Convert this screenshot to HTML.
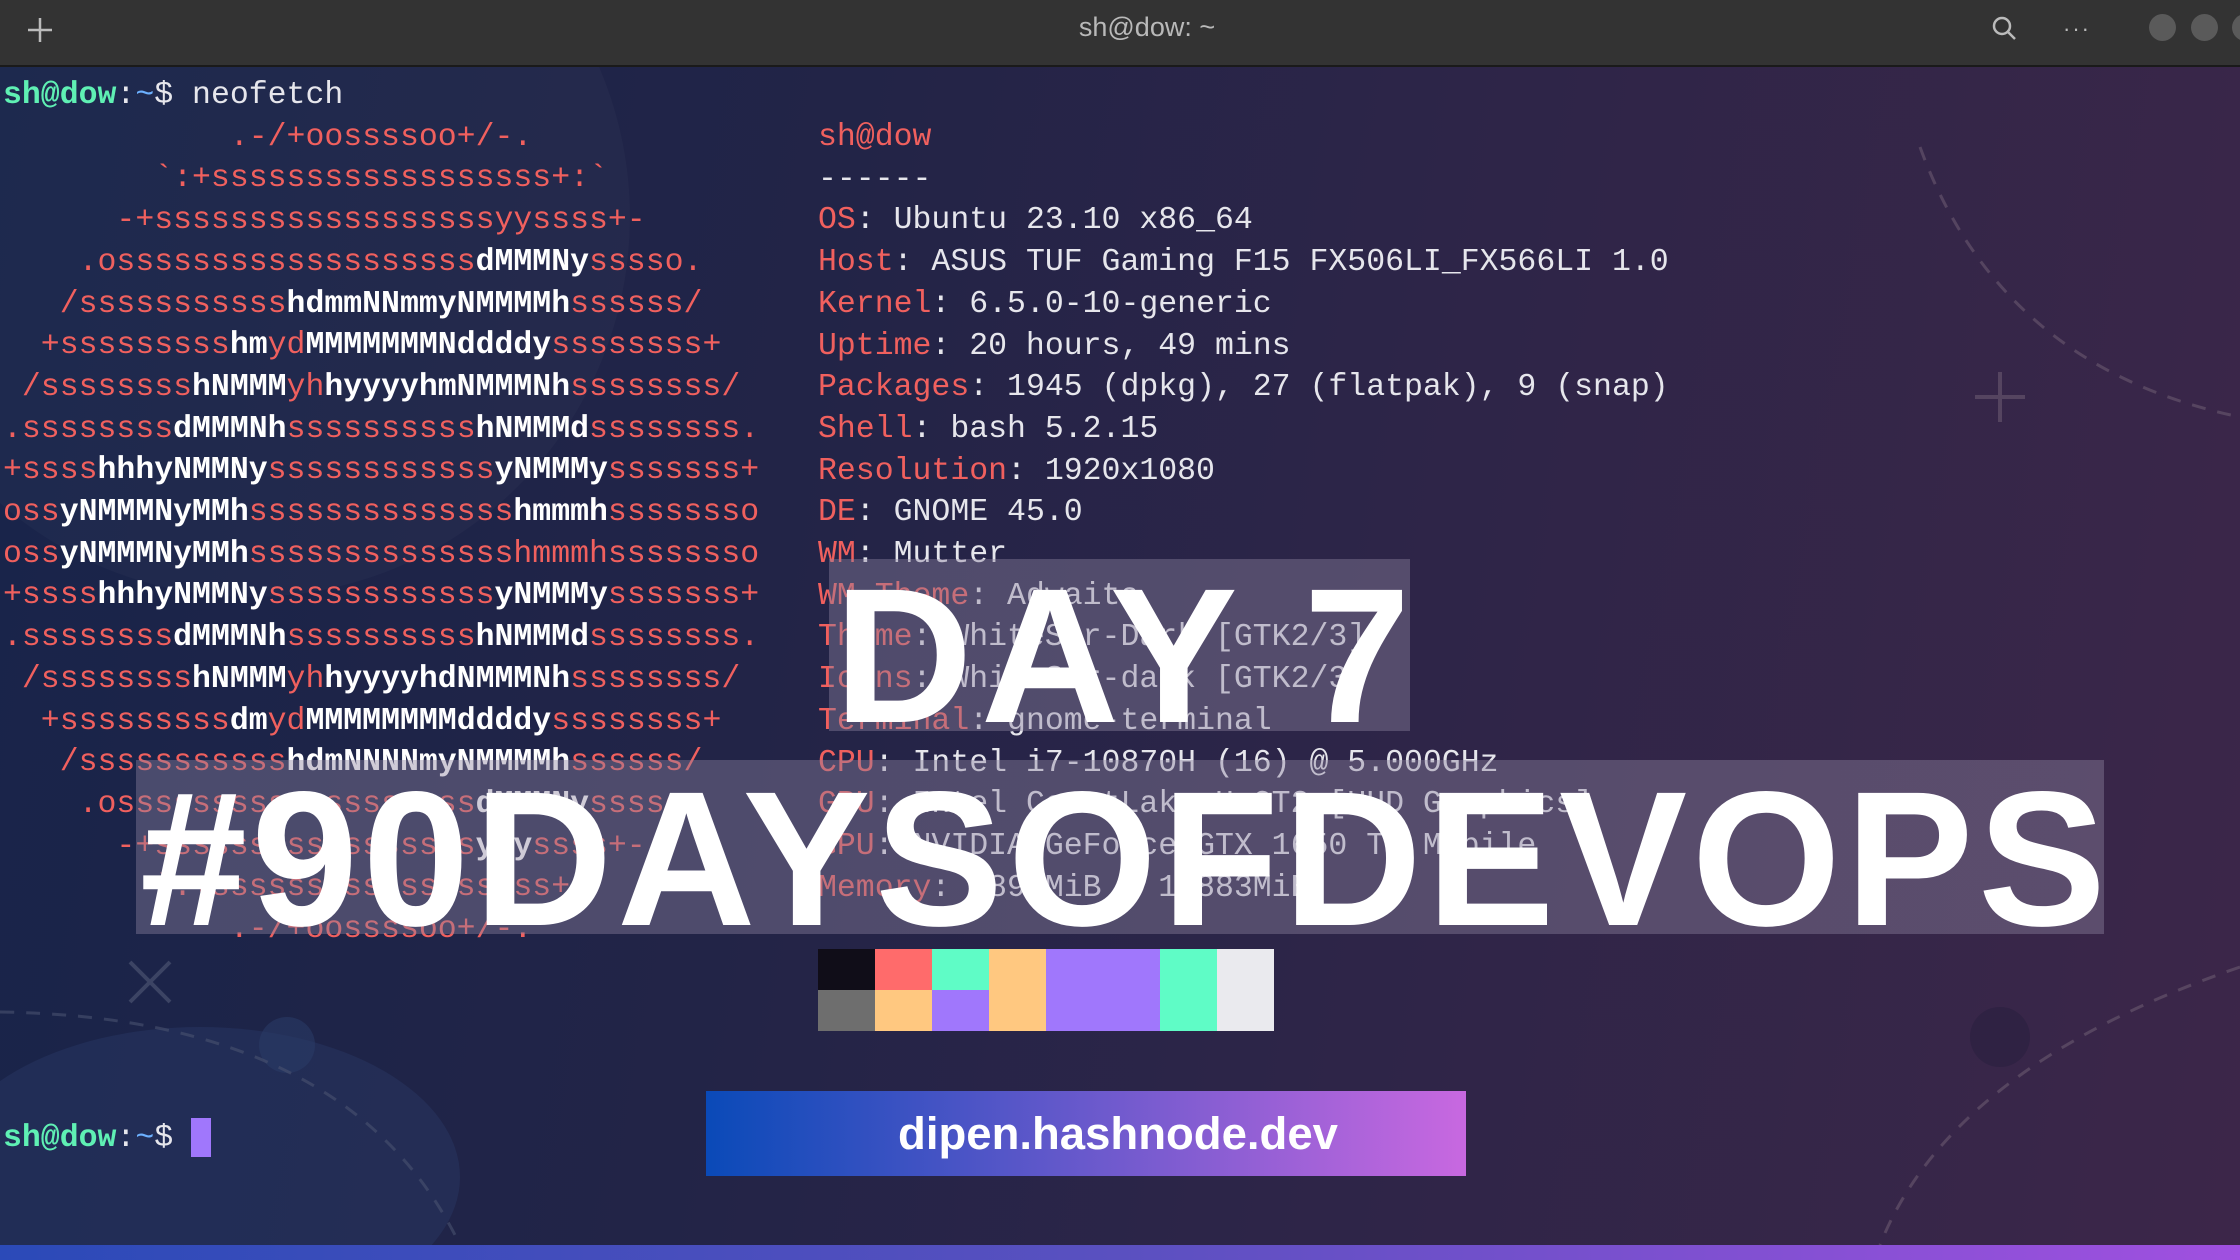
<!DOCTYPE html>
<html><head><meta charset="utf-8"><style>
*{margin:0;padding:0;box-sizing:border-box}
body{width:2240px;height:1260px;overflow:hidden;background:#1c2242;position:relative;font-family:"Liberation Sans",sans-serif}
#bg{position:absolute;left:0;top:67px;width:2240px;height:1178px;background:linear-gradient(100deg,#18244a 0%,#222447 35%,#2d2548 60%,#3c2649 100%)}
#bar{position:absolute;left:0;top:0;width:2240px;height:67px;background:#333333;border-bottom:2px solid #1a1a1a;overflow:hidden}
#title{position:absolute;top:0;left:27px;width:2240px;text-align:center;line-height:54px;color:#b9b9b9;font-size:27px}
.circ{position:absolute;top:14px;width:27px;height:27px;border-radius:50%;background:#5a5a5a}
pre{position:absolute;font-family:"Liberation Mono",monospace;font-size:31.5px;line-height:41.7px;white-space:pre;color:#f0605e}
.w{color:#fff;font-weight:bold}
.g{color:#5ff0b4;font-weight:bold}
.b{color:#6cb0ff}
.t{color:#e6e6ec}
.box{position:absolute;background:rgba(140,130,160,0.42)}
.big{position:absolute;color:#fff;font-weight:bold;font-size:192px;line-height:1;white-space:nowrap}
</style></head><body>
<div id="bg"></div>
<svg style="position:absolute;left:0;top:67px" width="2240" height="1178">
<circle cx="250" cy="150" r="380" fill="#ffffff" opacity="0.025"/>
<ellipse cx="200" cy="1110" rx="260" ry="150" fill="#2a3a66" opacity="0.45"/>
<circle cx="287" cy="978" r="28" fill="#2a3a66" opacity="0.6"/>
<circle cx="2000" cy="970" r="30" fill="#2a2040" opacity="0.6"/>
<path d="M1920 80 Q2000 300 2240 350" stroke="#6a5a70" stroke-width="3" fill="none" stroke-dasharray="14 12" opacity="0.6"/>
<path d="M2240 900 Q1950 1000 1880 1178" stroke="#6a5a70" stroke-width="3" fill="none" stroke-dasharray="14 12" opacity="0.6"/>
<path d="M0 945 Q350 950 460 1178" stroke="#4a5270" stroke-width="3" fill="none" stroke-dasharray="14 12" opacity="0.6"/>
<path d="M2000 305 l0 50 M1975 330 l50 0" stroke="#6a5a70" stroke-width="4" opacity="0.6"/>
<path d="M130 895 l40 40 M170 895 l-40 40" stroke="#4a5270" stroke-width="4" opacity="0.7"/>
</svg>
<div id="bar">
<svg style="position:absolute;left:26px;top:16px" width="28" height="28"><path d="M14 2v24M2 14h24" stroke="#bbb" stroke-width="2.5"/></svg>
<div id="title">sh@dow: ~</div>
<svg style="position:absolute;left:1990px;top:14px" width="30" height="30"><circle cx="12" cy="12" r="8" stroke="#bbb" stroke-width="2.5" fill="none"/><path d="M18 18l7 7" stroke="#bbb" stroke-width="2.5"/></svg>
<div style="position:absolute;left:2063px;top:25px;color:#bbb;font-size:22px;letter-spacing:2px;line-height:8px">···</div>
<div class="circ" style="left:2149px"></div>
<div class="circ" style="left:2191px"></div>
<div class="circ" style="left:2232px"></div>
</div>
<div style="position:absolute;left:0;top:1245px;width:2240px;height:15px;background:linear-gradient(90deg,#2b4ab8,#5a50c0 50%,#a050e0)"></div>
<pre style="left:3px;top:75px"><span class="g">sh@dow</span><span class="t">:</span><span class="b">~</span><span class="t">$ neofetch</span>
            .-/+oossssoo+/-.
        `:+ssssssssssssssssss+:`
      -+ssssssssssssssssssyyssss+-
    .osssssssssssssssssss<span class="w">dMMMNy</span>sssso.
   /sssssssssss<span class="w">hdmmNNmmyNMMMMh</span>ssssss/
  +sssssssss<span class="w">hm</span>yd<span class="w">MMMMMMMNddddy</span>ssssssss+
 /ssssssss<span class="w">hNMMM</span>yh<span class="w">hyyyyhmNMMMNh</span>ssssssss/
.ssssssss<span class="w">dMMMNh</span>ssssssssss<span class="w">hNMMMd</span>ssssssss.
+ssss<span class="w">hhhyNMMNy</span>ssssssssssss<span class="w">yNMMMy</span>sssssss+
oss<span class="w">yNMMMNyMMh</span>ssssssssssssss<span class="w">hmmmh</span>ssssssso
oss<span class="w">yNMMMNyMMh</span>sssssssssssssshmmmhssssssso
+ssss<span class="w">hhhyNMMNy</span>ssssssssssss<span class="w">yNMMMy</span>sssssss+
.ssssssss<span class="w">dMMMNh</span>ssssssssss<span class="w">hNMMMd</span>ssssssss.
 /ssssssss<span class="w">hNMMM</span>yh<span class="w">hyyyyhdNMMMNh</span>ssssssss/
  +sssssssss<span class="w">dm</span>yd<span class="w">MMMMMMMMddddy</span>ssssssss+
   /sssssssssss<span class="w">hdmNNNNmyNMMMMh</span>ssssss/
    .osssssssssssssssssss<span class="w">dMMMNy</span>sssso.
      -+sssssssssssssssss<span class="w">yyy</span>ssss+-
        `:+ssssssssssssssssss+:`
            .-/+oossssoo+/-.




<span class="g">sh@dow</span><span class="t">:</span><span class="b">~</span><span class="t">$ </span></pre>
<div style="position:absolute;left:191px;top:1118px;width:20px;height:39px;background:#a077fc"></div>
<pre style="left:818px;top:117px">sh@dow
<span class="t">------</span>
OS<span class="t">: Ubuntu 23.10 x86_64</span>
Host<span class="t">: ASUS TUF Gaming F15 FX506LI_FX566LI 1.0</span>
Kernel<span class="t">: 6.5.0-10-generic</span>
Uptime<span class="t">: 20 hours, 49 mins</span>
Packages<span class="t">: 1945 (dpkg), 27 (flatpak), 9 (snap)</span>
Shell<span class="t">: bash 5.2.15</span>
Resolution<span class="t">: 1920x1080</span>
DE<span class="t">: GNOME 45.0</span>
WM<span class="t">: Mutter</span>
WM Theme<span class="t">: Adwaita</span>
Theme<span class="t">: WhiteSur-Dark [GTK2/3]</span>
Icons<span class="t">: WhiteSur-dark [GTK2/3]</span>
Terminal<span class="t">: gnome-terminal</span>
CPU<span class="t">: Intel i7-10870H (16) @ 5.000GHz</span>
GPU<span class="t">: Intel CometLake-H GT2 [UHD Graphics]</span>
GPU<span class="t">: NVIDIA GeForce GTX 1650 Ti Mobile</span>
Memory<span class="t">: 6899MiB / 15883MiB</span></pre>
<div class="box" style="left:829px;top:559px;width:581px;height:172px"></div>
<div class="box" style="left:136px;top:760px;width:1968px;height:174px"></div>
<div class="big" style="left:834px;top:560px;letter-spacing:8px">DAY 7</div>
<div class="big" style="left:140px;top:763px;letter-spacing:4.5px">#90DAYSOFDEVOPS</div>
<div style="position:absolute;left:818px;top:949px;width:456px;height:82px">
<div style="position:absolute;left:0;top:0;width:57px;height:41px;background:#100d18"></div>
<div style="position:absolute;left:0;top:41px;width:57px;height:41px;background:#6e6e6e"></div>
<div style="position:absolute;left:57px;top:0;width:57px;height:41px;background:#ff6b6b"></div>
<div style="position:absolute;left:57px;top:41px;width:57px;height:41px;background:#ffc880"></div>
<div style="position:absolute;left:114px;top:0;width:57px;height:41px;background:#5ffcc6"></div>
<div style="position:absolute;left:114px;top:41px;width:57px;height:41px;background:#a077fc"></div>
<div style="position:absolute;left:171px;top:0;width:57px;height:82px;background:#ffc880"></div>
<div style="position:absolute;left:228px;top:0;width:114px;height:82px;background:#a077fc"></div>
<div style="position:absolute;left:342px;top:0;width:57px;height:82px;background:#5ffcc6"></div>
<div style="position:absolute;left:399px;top:0;width:57px;height:82px;background:#eaeaee"></div>
</div>
<div style="position:absolute;left:706px;top:1091px;width:760px;height:85px;background:linear-gradient(90deg,#0a4ab8,#c868e0);color:#fff;font-weight:bold;font-size:45.5px;text-align:center;line-height:85px;padding-left:64px">dipen.hashnode.dev</div>
</body></html>
